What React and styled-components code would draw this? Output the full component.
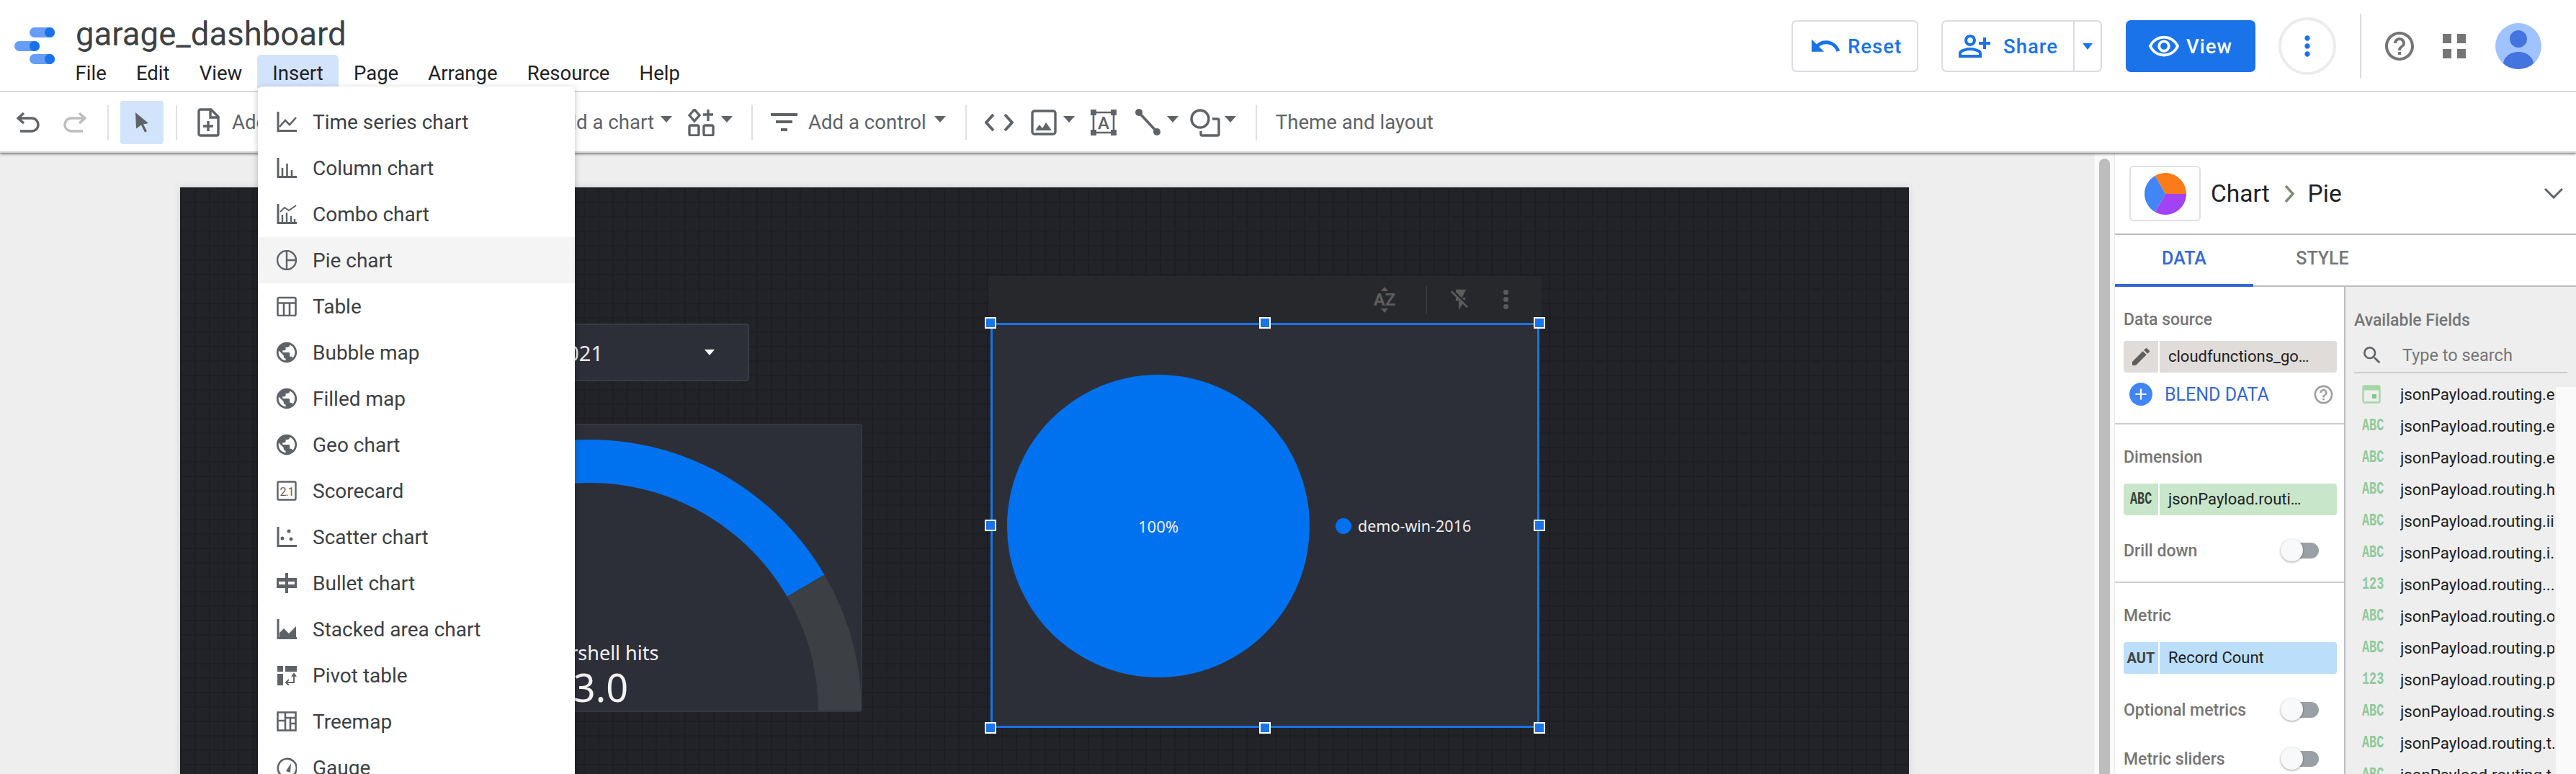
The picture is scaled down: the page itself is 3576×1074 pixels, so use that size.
import React from "react";
import styled, { createGlobalStyle } from "styled-components";
import {
  MdPublic,
  MdUndo,
  MdOutlinePersonAddAlt,
  MdOutlineRemoveRedEye,
  MdMoreVert,
  MdHelpOutline,
  MdEdit,
  MdSearch,
  MdAdd,
  MdFlashOff,
} from "react-icons/md";

const GlobalStyle = createGlobalStyle`
  html, body {
    margin: 0;
    padding: 0;
    overflow: hidden;
    background: #eee;
    font-family: Roboto, "Liberation Sans", sans-serif;
  }
  * { box-sizing: border-box; }
`;

const Page = styled.div`
  position: relative;
  width: 3576px;
  height: 1074px;
  display: flex;
  flex-direction: column;
  overflow: hidden;
`;

/* ---- top header ---- */
const Header = styled.header`
  height: 128px;
  flex: none;
  display: flex;
  align-items: center;
  background: #fff;
  border-bottom: 2px solid #dadce0;
  padding: 2px 48px 0 20px;
`;
const Logo = styled.svg`
  width: 56px;
  height: 52px;
  flex: none;
`;
const TitleBlock = styled.div`
  align-self: flex-start;
  margin-left: 29px;
  padding-top: 22px;
  display: flex;
  flex-direction: column;
`;
const Title = styled.div`
  font-size: 45.5px;
  line-height: 48px;
  color: #3c4043;
`;
const MenuBar = styled.nav`
  display: flex;
  margin-left: -21px;
  margin-top: 4px;
`;
const MenuItem = styled.div`
  height: 46px;
  padding: 0 ${(p) => (p.$active ? 21.6 : 20.6)}px;
  font-size: 27.5px;
  line-height: 52px;
  color: #202124;
  border-radius: 6px 6px 0 0;
  background: ${(p) => (p.$active ? "#d2e3fc" : "transparent")};
`;
const HeaderRight = styled.div`
  margin-left: auto;
  display: flex;
  align-items: center;
`;
const OutlineButton = styled.div`
  height: 72px;
  width: ${(p) => p.$w}px;
  margin-left: ${(p) => p.$ml || 0}px;
  display: flex;
  align-items: center;
  border: 2px solid #dadce0;
  border-radius: 7px;
  color: #1a73e8;
  font-size: 27.5px;
  letter-spacing: 1px;
  font-weight: 500;
  padding-left: ${(p) => p.$pl}px;
`;
const ShareCaret = styled.div`
  margin-left: auto;
  width: 38px;
  height: 100%;
  border-left: 2px solid #dadce0;
  display: flex;
  align-items: center;
  justify-content: center;
  &::before {
    content: "";
    border-left: 7px solid transparent;
    border-right: 7px solid transparent;
    border-top: 9px solid #1a73e8;
  }
`;
const ViewButton = styled.div`
  height: 72px;
  width: 180px;
  margin-left: 33px;
  display: flex;
  align-items: center;
  padding-left: 30px;
  gap: 8px;
  background: #1a73e8;
  color: #fff;
  border-radius: 7px;
  font-size: 27.5px;
  letter-spacing: 1px;
  font-weight: 500;
`;
const MoreButton = styled.div`
  width: 80px;
  height: 80px;
  margin-left: 32px;
  border: 4px solid #ececec;
  border-radius: 50%;
  display: flex;
  align-items: center;
  justify-content: center;
  color: #1a73e8;
`;
const HeaderSep = styled.div`
  width: 2px;
  height: 90px;
  margin-left: 33px;
  background: #dadce0;
`;
const AppsGrid = styled.div`
  display: grid;
  grid-template-columns: 12px 12px;
  grid-auto-rows: 13px;
  gap: 8px;
  margin-left: 36px;
  & > span {
    background: #757575;
  }
`;
const Avatar = styled.svg`
  width: 64px;
  height: 64px;
  margin-left: 41px;
`;

/* ---- toolbar ---- */
const Toolbar = styled.div`
  position: relative;
  z-index: 2;
  height: 84px;
  flex: none;
  display: flex;
  align-items: center;
  background: #fff;
  border-bottom: 2px solid #d6d6d6;
  box-shadow: 0 2px 3px rgba(0, 0, 0, 0.45);
  padding: 1px 0 0 23px;
  color: #5f6368;
`;
const ToolIcon = styled.svg`
  flex: none;
  width: ${(p) => p.$w}px;
  height: ${(p) => p.$h || 36}px;
  margin-left: ${(p) => p.$ml || 0}px;
`;
const ToolSep = styled.div`
  flex: none;
  width: 2px;
  height: 48px;
  background: #e0e0e0;
  margin-left: ${(p) => p.$ml}px;
`;
const ToolCaret = styled.div`
  flex: none;
  margin-left: ${(p) => p.$ml}px;
  margin-top: -8px;
  border-left: 8px solid transparent;
  border-right: 8px solid transparent;
  border-top: 9px solid #5f6368;
`;
const ToolLabel = styled.div`
  flex: none;
  margin-left: ${(p) => p.$ml || 0}px;
  font-size: 27.6px;
  color: #5f6368;
  white-space: nowrap;
`;
const PointerTool = styled.div`
  flex: none;
  width: 60px;
  height: 60px;
  margin-left: 16px;
  background: #d2e3fc;
  border-radius: 4px;
  display: flex;
  align-items: center;
  justify-content: center;
`;
const AddGroup = styled.div`
  flex: none;
  width: 635px;
  margin-left: 27px;
  display: flex;
  align-items: center;
  & > ${ToolLabel}:last-child {
    margin-left: auto;
  }
`;

/* ---- work area ---- */
const Body = styled.div`
  flex: 1;
  min-height: 0;
  display: flex;
`;
const Workspace = styled.div`
  flex: 1;
  min-width: 0;
  padding: 48px 0 0 250px;
  background: #eee;
  overflow: hidden;
`;
const Canvas = styled.div`
  position: relative;
  width: 2400px;
  height: 820px;
  background-color: #212328;
  background-image: linear-gradient(#1c1e22 2px, transparent 2px),
    linear-gradient(90deg, #1c1e22 2px, transparent 2px);
  background-size: 20px 20px;
  background-position: 20px 20px;
  box-shadow: 0 0 10px rgba(0, 0, 0, 0.12);
`;
const FilterWidget = styled.div`
  position: absolute;
  left: 370px;
  top: 189px;
  width: 420px;
  height: 80px;
  display: flex;
  align-items: center;
  justify-content: flex-end;
  gap: 141px;
  padding-right: 46px;
  background: #2d2f38;
  border: 2px solid #3a3c44;
  border-radius: 4px;
  color: #e8e8e8;
  font-family: "Noto Sans", sans-serif;
  font-size: 29px;
  &::after {
    content: "";
    border-left: 7px solid transparent;
    border-right: 7px solid transparent;
    border-top: 8px solid #fff;
  }
`;
const GaugeWidget = styled.div`
  position: absolute;
  left: 190px;
  top: 328px;
  width: 757px;
  height: 400px;
  background: #2d2f38;
  border: 2px solid #34363d;
  border-radius: 4px;
  overflow: hidden;
  display: flex;
  flex-direction: column;
  align-items: center;
  justify-content: flex-end;
  padding-bottom: 3px;
  color: #f2f2f2;
  font-family: "Noto Sans", sans-serif;
`;
const GaugeArc = styled.svg`
  position: absolute;
  left: -2px;
  top: -2px;
  width: 757px;
  height: 400px;
`;
const GaugeLabel = styled.div`
  position: relative;
  font-size: 27px;
  line-height: 34px;
`;
const GaugeValue = styled.div`
  position: relative;
  font-size: 54px;
  line-height: 60px;
`;
const ChartBar = styled.div`
  position: absolute;
  left: 1122px;
  top: 123px;
  width: 768px;
  height: 65px;
  background: #27282c;
  display: flex;
  align-items: center;
  justify-content: flex-end;
  color: #5c5c5c;
`;
const SortAz = styled.div`
  font-size: 24px;
  font-weight: 700;
  line-height: 20px;
  width: 28px;
  text-align: center;
  display: flex;
  flex-direction: column;
  align-items: center;
  gap: 2px;
  &::before,
  &::after {
    content: "";
    border-left: 5px solid transparent;
    border-right: 5px solid transparent;
  }
  &::before {
    border-bottom: 6px solid #5c5c5c;
  }
  &::after {
    border-top: 6px solid #5c5c5c;
  }
`;
const BarSep = styled.div`
  width: 1px;
  height: 38px;
  margin: 0 30px 0 44px;
  background: #424242;
`;
const BarDots = styled.div`
  margin: 0 46px 0 42px;
  display: flex;
  flex-direction: column;
  gap: 3px;
  & > span {
    width: 7px;
    height: 7px;
    border-radius: 50%;
    background: #5c5c5c;
  }
`;
const PieWidget = styled.div`
  position: absolute;
  left: 1125px;
  top: 188px;
  width: 762px;
  height: 562px;
  background: #2d2f38;
  box-shadow: inset 0 0 0 3px #1a73e8;
  display: flex;
  align-items: center;
  padding: 1px 0 0 23px;
  font-family: "Noto Sans", sans-serif;
  color: #eee;
`;
const PieCircle = styled.div`
  width: 420px;
  height: 420px;
  flex: none;
  border-radius: 50%;
  background: #0072f0;
  display: flex;
  align-items: center;
  justify-content: center;
  font-size: 22px;
`;
const Legend = styled.div`
  margin-left: 36px;
  display: flex;
  align-items: center;
  gap: 9px;
  font-size: 21.5px;
  &::before {
    content: "";
    width: 22px;
    height: 22px;
    border-radius: 50%;
    background: #0072f0;
  }
`;
const Handle = styled.div`
  position: absolute;
  left: ${(p) => p.$x}%;
  top: ${(p) => p.$y}%;
  width: 16px;
  height: 16px;
  transform: translate(-50%, -50%);
  background: #1a73e8;
  border: 2px solid #fff;
`;

/* ---- insert dropdown ---- */
const Dropdown = styled.div`
  position: absolute;
  z-index: 3;
  left: 358px;
  top: 120px;
  width: 440px;
  bottom: -10px;
  padding-top: 17px;
  background: #fff;
  border-radius: 6px 6px 0 0;
  box-shadow: 0 2px 8px rgba(0, 0, 0, 0.25);
`;
const DropRow = styled.div`
  height: 64px;
  display: flex;
  align-items: center;
  gap: 22px;
  padding-left: 26px;
  font-size: 28px;
  color: #3c4043;
  background: ${(p) => (p.$hover ? "#f4f4f4" : "transparent")};
`;
const RowIcon = styled.svg`
  width: 28px;
  height: 28px;
  flex: none;
`;

/* ---- right panel ---- */
const ScrollTrack = styled.div`
  flex: none;
  width: 28px;
  padding: 8px 6px 0;
  background: #fafafa;
  border-right: 1px solid #e8e8e8;
  &::before {
    content: "";
    display: block;
    height: 100%;
    background: #bdbdbd;
    border-radius: 8px 8px 0 0;
  }
`;
const Panel = styled.aside`
  flex: none;
  width: 640px;
  display: flex;
  flex-direction: column;
  background: #fff;
`;
const PanelHead = styled.div`
  height: 114px;
  flex: none;
  display: flex;
  align-items: flex-start;
  padding: 18px 17px 0 20px;
  border-bottom: 2px solid #bdbdbd;
`;
const ChartThumb = styled.div`
  width: 99px;
  height: 77px;
  border: 2px solid #e0e0e0;
  border-radius: 6px;
  display: flex;
  align-items: center;
  justify-content: center;
`;
const Crumbs = styled.div`
  height: 77px;
  margin-left: 14px;
  display: flex;
  align-items: center;
  font-size: 33.5px;
  color: #202124;
`;
const CrumbChevron = styled.svg`
  width: 15px;
  height: 26px;
  margin: 0 18px 0 20px;
`;
const PanelChevron = styled.svg`
  width: 28px;
  height: 16px;
  margin: 30px 0 0 auto;
`;
const Tabs = styled.div`
  height: 72px;
  flex: none;
  display: flex;
  border-bottom: 2px solid #bdbdbd;
`;
const Tab = styled.div`
  width: 192px;
  height: 72px;
  display: flex;
  align-items: center;
  justify-content: center;
  padding-bottom: 4px;
  font-size: 25px;
  font-weight: 500;
  color: ${(p) => (p.$active ? "#3367d6" : "#757575")};
  border-bottom: 4px solid ${(p) => (p.$active ? "#3367d6" : "transparent")};
`;
const PanelColumns = styled.div`
  flex: 1;
  min-height: 0;
  display: flex;
  position: relative;
`;
const SetupCol = styled.div`
  width: 320px;
  flex: none;
  border-right: 2px solid #bdbdbd;
`;
const Section = styled.section`
  padding: 29px 0 ${(p) => p.$pb || 0}px 12px;
  border-bottom: ${(p) => (p.$line ? "2px solid #ccc" : "none")};
`;
const SectionLabel = styled.div`
  height: 30px;
  line-height: 33px;
  font-size: 23px;
  font-weight: 500;
  color: #757575;
  white-space: nowrap;
`;
const Pill = styled.div`
  width: 296px;
  height: 44px;
  margin-top: ${(p) => p.$mt || 23}px;
  display: flex;
  background: ${(p) => p.$bg};
  border-radius: 4px;
  font-size: 22px;
  color: #202124;
`;
const PillType = styled.div`
  width: 50px;
  flex: none;
  border-right: 2px solid #fff;
  display: flex;
  align-items: center;
  justify-content: center;
  color: #424242;
`;
const TypeMono = styled.span`
  display: inline-block;
  width: 30px;
  font-family: "Liberation Mono", monospace;
  font-size: 24px;
  line-height: 24px;
  font-weight: 700;
  white-space: nowrap;
  transform: scaleX(0.7);
  transform-origin: left center;
  color: ${(p) => p.$color};
`;
const AutoTag = styled.span`
  font-size: 20px;
  font-weight: 700;
  color: #424242;
`;
const PillText = styled.div`
  padding-left: 12px;
  line-height: 44px;
  white-space: nowrap;
`;
const BlendRow = styled.div`
  display: flex;
  align-items: center;
  height: 32px;
  margin: 14px 0 0 8px;
  padding-right: 13px;
  color: #3367d6;
  font-size: 25px;
`;
const BlendPlus = styled.div`
  width: 32px;
  height: 32px;
  margin-right: 17px;
  border-radius: 50%;
  background: #4285f4;
  display: flex;
  align-items: center;
  justify-content: center;
  color: #fff;
`;
const BlendHelp = styled.div`
  margin-left: auto;
  display: flex;
  color: #9e9e9e;
`;
const ToggleRow = styled.div`
  display: flex;
  align-items: center;
  justify-content: space-between;
  height: 32px;
  margin-top: ${(p) => p.$mt}px;
  padding-right: 35px;
  font-size: 23px;
  font-weight: 500;
  color: #757575;
`;
const Toggle = styled.div`
  position: relative;
  width: 53px;
  height: 32px;
  &::before {
    content: "";
    position: absolute;
    left: 10px;
    right: 0;
    top: 5px;
    height: 22px;
    border-radius: 11px;
    background: #9aa0a6;
  }
  &::after {
    content: "";
    position: absolute;
    left: 0;
    top: 0;
    width: 31px;
    height: 31px;
    border-radius: 50%;
    background: #f8f9fa;
    box-shadow: 0 1px 3px rgba(0, 0, 0, 0.4);
  }
`;
const FieldsCol = styled.div`
  flex: 1;
  min-width: 0;
  padding-top: 30px;
  background: #eee;
  overflow: hidden;
`;
const FieldsLabel = styled(SectionLabel)`
  padding-left: 12px;
`;
const SearchRow = styled.div`
  height: 46px;
  margin: 14px 12px 0 12px;
  display: flex;
  align-items: center;
  border-bottom: 2px solid #ccc;
  padding: 0 0 3px 9px;
  color: #5f6368;
  font-size: 23.5px;
`;
const SearchHint = styled.span`
  margin-left: 26px;
  color: #757575;
`;
const FieldList = styled.div`
  margin-top: 7px;
`;
const FieldRow = styled.div`
  height: 44px;
  display: flex;
  align-items: center;
  padding-left: 23px;
  font-size: 22.3px;
  color: #212121;
  white-space: nowrap;
`;
const FieldType = styled.div`
  width: 53px;
  flex: none;
  display: flex;
  align-items: center;
`;
const FieldName = styled.div`
  width: 214px;
  overflow: hidden;
`;
const FieldScroll = styled.div`
  position: absolute;
  right: 0;
  top: 139px;
  bottom: 0;
  width: 28px;
  background: #fafafa;
`;

const chartAxes = "M2 0V26.5H28";

const menuRows = [
  {
    label: "Time series chart",
    icon: (
      <>
        <path d={chartAxes} fill="none" stroke="#5f6368" strokeWidth="3" />
        <path d="M4 21l8-9 6 6 9-10" fill="none" stroke="#5f6368" strokeWidth="2.6" />
      </>
    ),
  },
  {
    label: "Column chart",
    icon: (
      <>
        <path d={chartAxes} fill="none" stroke="#5f6368" strokeWidth="3" />
        <path d="M8 25V14M14.500 25V8M21 25V17" stroke="#5f6368" strokeWidth="2.6" />
      </>
    ),
  },
  {
    label: "Combo chart",
    icon: (
      <>
        <path d={chartAxes} fill="none" stroke="#5f6368" strokeWidth="3" />
        <path d="M8 25V15M14 25V12M20 25V17M25 25v-4" stroke="#5f6368" strokeWidth="2.4" />
        <path d="M5 11l6-6 6 4 10-7" fill="none" stroke="#5f6368" strokeWidth="2" />
      </>
    ),
  },
  {
    label: "Pie chart",
    icon: (
      <>
        <circle cx="14" cy="14" r="13" fill="none" stroke="#5f6368" strokeWidth="2.4" />
        <path d="M14 1v26M14 14h13" stroke="#5f6368" strokeWidth="2.4" />
      </>
    ),
  },
  {
    label: "Table",
    icon: (
      <>
        <rect x="1.500" y="2" width="25" height="25" rx="2" fill="none" stroke="#5f6368" strokeWidth="2.6" />
        <path d="M1.500 9.500h25M10 9.500V27M18 9.500V27" stroke="#5f6368" strokeWidth="2.6" />
      </>
    ),
  },
  { label: "Bubble map", globe: true },
  { label: "Filled map", globe: true },
  { label: "Geo chart", globe: true },
  {
    label: "Scorecard",
    icon: (
      <>
        <rect x="1.500" y="1.500" width="25" height="25" rx="1.500" fill="none" stroke="#5f6368" strokeWidth="2.4" />
        <text x="14" y="20.500" textAnchor="middle" fontSize="16" fill="#5f6368" fontFamily="Roboto, sans-serif" letterSpacing="-1">
          2.1
        </text>
      </>
    ),
  },
  {
    label: "Scatter chart",
    icon: (
      <>
        <path d={chartAxes} fill="none" stroke="#5f6368" strokeWidth="3" />
        <circle cx="8" cy="16" r="2.500" fill="#5f6368" />
        <circle cx="17" cy="6" r="2.500" fill="#5f6368" />
        <circle cx="20" cy="17" r="2.500" fill="#5f6368" />
      </>
    ),
  },
  {
    label: "Bullet chart",
    icon: (
      <path
        fillRule="evenodd"
        fill="#5f6368"
        d="M12 0h4v7h12v14H16v7h-4v-7H0V7h12zM3 12v4h9v-4zm13 0v4h9v-4z"
      />
    ),
  },
  {
    label: "Stacked area chart",
    icon: (
      <>
        <path d={chartAxes} fill="none" stroke="#5f6368" strokeWidth="3" />
        <path d="M4 26v-7l6-6 7 7 10-10v16z" fill="#5f6368" />
      </>
    ),
  },
  {
    label: "Pivot table",
    icon: (
      <>
        <path d="M1 1h8v8H1zM12 1h16v8H12zM1 12h8v16H1z" fill="#5f6368" />
        <path d="M24 13v11H14M17 20l-4 4 4 4M21 16l3-4 3 4" fill="none" stroke="#5f6368" strokeWidth="2" />
      </>
    ),
  },
  {
    label: "Treemap",
    icon: (
      <>
        <rect x="1.500" y="1.500" width="25" height="25" fill="none" stroke="#5f6368" strokeWidth="2.6" />
        <path d="M12 1.500v25M1.500 13H12M12 9h14.500M19 9v17.500M19 17h7.500" fill="none" stroke="#5f6368" strokeWidth="2.6" />
      </>
    ),
  },
  {
    label: "Gauge",
    icon: (
      <>
        <path d="M8 26A13 13 0 1 1 24 24" fill="none" stroke="#5f6368" strokeWidth="2.6" />
        <path d="M13 19l7-11-1 13z" fill="#5f6368" />
      </>
    ),
  },
];

const fieldRows = [
  ["date", "jsonPayload.routing.e."],
  ["abc", "jsonPayload.routing.e."],
  ["abc", "jsonPayload.routing.e."],
  ["abc", "jsonPayload.routing.h"],
  ["abc", "jsonPayload.routing.iid"],
  ["abc", "jsonPayload.routing.i.."],
  ["num", "jsonPayload.routing...."],
  ["abc", "jsonPayload.routing.o"],
  ["abc", "jsonPayload.routing.p"],
  ["num", "jsonPayload.routing.p"],
  ["abc", "jsonPayload.routing.si"],
  ["abc", "jsonPayload.routing.t.."],
  ["abc", "jsonPayload.routing.t"],
];

const FieldTypeIcon = ({ kind }) => {
  if (kind === "date") {
    return (
      <svg width="26" height="26" viewBox="0 0 26 26">
        <rect x="1.500" y="1.500" width="23" height="23" rx="2" fill="none" stroke="#a5d6a7" strokeWidth="2.400" />
        <rect x="1.500" y="1.500" width="23" height="6" fill="#a5d6a7" />
        <rect x="14" y="13" width="6" height="6" fill="#81c784" />
      </svg>
    );
  }
  return <TypeMono $color="#8fc99a">{kind === "abc" ? "ABC" : "123"}</TypeMono>;
};

export default function App() {
  return (
    <Page>
      <GlobalStyle />
      <Header>
        <Logo viewBox="0 0 56 52">
          <rect x="21" y="0" width="35" height="14" rx="7" fill="#669df6" />
          <circle cx="49" cy="7" r="7" fill="#1a73e8" />
          <rect x="0" y="19" width="35" height="14" rx="7" fill="#669df6" />
          <circle cx="28" cy="26" r="7" fill="#1a73e8" />
          <rect x="21" y="37" width="35" height="14" rx="7" fill="#669df6" />
          <circle cx="49" cy="44" r="7" fill="#1a73e8" />
        </Logo>
        <TitleBlock>
          <Title>garage_dashboard</Title>
          <MenuBar>
            <MenuItem>File</MenuItem>
            <MenuItem>Edit</MenuItem>
            <MenuItem>View</MenuItem>
            <MenuItem $active>Insert</MenuItem>
            <MenuItem>Page</MenuItem>
            <MenuItem>Arrange</MenuItem>
            <MenuItem>Resource</MenuItem>
            <MenuItem>Help</MenuItem>
          </MenuBar>
        </TitleBlock>
        <HeaderRight>
          <OutlineButton $w={176} $pl={22}>
            <MdUndo size={46} style={{ marginRight: 8 }} />
            Reset
          </OutlineButton>
          <OutlineButton $w={223} $ml={32} $pl={20}>
            <MdOutlinePersonAddAlt size={48} style={{ marginRight: 16 }} />
            Share
            <ShareCaret />
          </OutlineButton>
          <ViewButton>
            <MdOutlineRemoveRedEye size={46} />
            View
          </ViewButton>
          <MoreButton>
            <MdMoreVert size={44} />
          </MoreButton>
          <HeaderSep />
          <MdHelpOutline size={48} color="#757575" style={{ marginLeft: 29 }} />
          <AppsGrid>
            <span />
            <span />
            <span />
            <span />
          </AppsGrid>
          <Avatar viewBox="0 0 64 64">
            <defs>
              <clipPath id="avatarClip">
                <circle cx="32" cy="32" r="32" />
              </clipPath>
            </defs>
            <circle cx="32" cy="32" r="32" fill="#a0c3ff" />
            <g clipPath="url(#avatarClip)" fill="#4374e0">
              <circle cx="32" cy="22" r="12" />
              <ellipse cx="32" cy="57" rx="21" ry="17" />
            </g>
          </Avatar>
        </HeaderRight>
      </Header>

      <Toolbar>
        <ToolIcon $w={32} $h={30} viewBox="0 0 32 30">
          <path d="M10 2L2 9l8 7M3 9h18a9 9 0 0 1 0 18H5" fill="none" stroke="#5f6368" strokeWidth="3.400" />
        </ToolIcon>
        <ToolIcon $w={32} $h={30} $ml={33} viewBox="0 0 32 30">
          <path d="M22 2l8 7-8 7M29 9H11a9 9 0 0 0 0 18h16" fill="none" stroke="#bdbdbd" strokeWidth="3.400" />
        </ToolIcon>
        <ToolSep $ml={29} />
        <PointerTool>
          <svg width="20" height="28" viewBox="0 0 20 28">
            <path d="M1 0l18 15-7 1.500 5 9.500-3 1.500-5-10-7 5z" fill="#5f6368" />
          </svg>
        </PointerTool>
        <ToolSep $ml={17} />
        <AddGroup>
          <ToolIcon $w={32} $h={40} viewBox="0 0 32 40">
            <path d="M5 2h15l10 10v24a2 2 0 0 1-2 2H5a2 2 0 0 1-2-2V4a2 2 0 0 1 2-2zM19 3v10h10M16 18v14M9 25h14" fill="none" stroke="#5f6368" strokeWidth="3.400" />
          </ToolIcon>
          <ToolLabel $ml={17}>Add page</ToolLabel>
          <ToolLabel>Add a chart</ToolLabel>
        </AddGroup>
        <ToolCaret $ml={9} />
        <ToolIcon $w={38} $h={38} $ml={22} viewBox="0 0 38 38">
          <path d="M9 1l7 8-7 8-7-8zM28 1v16M21 8h14" fill="none" stroke="#5f6368" strokeWidth="3.400" />
          <rect x="2" y="23" width="13" height="14" rx="2" fill="none" stroke="#5f6368" strokeWidth="3.400" />
          <rect x="22" y="23" width="13" height="14" rx="2" fill="none" stroke="#5f6368" strokeWidth="3.400" />
        </ToolIcon>
        <ToolCaret $ml={8} />
        <ToolSep $ml={26} />
        <ToolIcon $w={37} $h={26} $ml={25} viewBox="0 0 37 26">
          <path d="M0 2h37M7 12h23M14 23h9" fill="none" stroke="#5f6368" strokeWidth="4" />
        </ToolIcon>
        <ToolLabel $ml={15}>Add a control</ToolLabel>
        <ToolCaret $ml={11} />
        <ToolSep $ml={27} />
        <ToolIcon $w={40} $h={26} $ml={25} viewBox="0 0 40 26">
          <path d="M12 2L2 13l10 11M28 2l10 11-10 11" fill="none" stroke="#5f6368" strokeWidth="4" />
        </ToolIcon>
        <ToolIcon $w={36} $h={36} $ml={24} viewBox="0 0 36 36">
          <rect x="2" y="2" width="32" height="32" rx="3" fill="none" stroke="#5f6368" strokeWidth="3.400" />
          <path d="M6 29l6-8 4 5 5-8 8 11z" fill="#5f6368" />
        </ToolIcon>
        <ToolCaret $ml={9} />
        <ToolIcon $w={36} $h={36} $ml={22} viewBox="0 0 36 36">
          <path d="M0 0h8v8H0zM28 0h8v8h-8zM0 28h8v8H0zM28 28h8v8h-8z" fill="#5f6368" />
          <path d="M4 4h28v28H4z" fill="none" stroke="#5f6368" strokeWidth="2.600" />
          <text x="18" y="27" textAnchor="middle" fontSize="24" fontWeight="500" fill="#5f6368" fontFamily="Roboto, sans-serif">
            A
          </text>
        </ToolIcon>
        <ToolIcon $w={37} $h={38} $ml={25} viewBox="0 0 37 38">
          <path d="M6 5l25 27" stroke="#5f6368" strokeWidth="3.600" />
          <circle cx="6" cy="5" r="5" fill="#5f6368" />
          <circle cx="31" cy="32" r="5" fill="#5f6368" />
        </ToolIcon>
        <ToolCaret $ml={8} />
        <ToolIcon $w={42} $h={40} $ml={16} viewBox="0 0 42 40">
          <circle cx="14" cy="15" r="12" fill="none" stroke="#5f6368" strokeWidth="3.400" />
          <path d="M31 15h7a2 2 0 0 1 2 2v19a2 2 0 0 1-2 2H17a2 2 0 0 1-2-2v-4" fill="none" stroke="#5f6368" strokeWidth="3.400" />
        </ToolIcon>
        <ToolCaret $ml={6} />
        <ToolSep $ml={27} />
        <ToolLabel $ml={26}>Theme and layout</ToolLabel>
      </Toolbar>

      <Body>
        <Workspace>
          <Canvas>
            <FilterWidget>
              <span>Jan 1, 2021</span>
            </FilterWidget>
            <GaugeWidget>
              <GaugeArc viewBox="0 0 757 400">
                <path d="M0 400A378 378 0 0 1 704.500 209.500L652.700 239.700A318 318 0 0 0 60 400Z" fill="#0072f0" />
                <path d="M704.500 209.500A378 378 0 0 1 756 400H696A318 318 0 0 0 652.700 239.700Z" fill="#3c3f43" />
              </GaugeArc>
              <GaugeLabel>Powershell hits</GaugeLabel>
              <GaugeValue>13.0</GaugeValue>
            </GaugeWidget>
            <ChartBar>
              <SortAz>AZ</SortAz>
              <BarSep />
              <MdFlashOff size={34} />
              <BarDots>
                <span />
                <span />
                <span />
              </BarDots>
            </ChartBar>
            <PieWidget>
              <PieCircle>100%</PieCircle>
              <Legend>demo-win-2016</Legend>
              <Handle $x={0} $y={0} />
              <Handle $x={50} $y={0} />
              <Handle $x={100} $y={0} />
              <Handle $x={0} $y={50} />
              <Handle $x={100} $y={50} />
              <Handle $x={0} $y={100} />
              <Handle $x={50} $y={100} />
              <Handle $x={100} $y={100} />
            </PieWidget>
          </Canvas>
        </Workspace>
        <ScrollTrack />
        <Panel>
          <PanelHead>
            <ChartThumb>
              <svg width="58" height="58" viewBox="-29 -29 58 58">
                <path d="M0 0L-14.500 -25.100A29 29 0 0 1 29 0Z" fill="#fa7b17" />
                <path d="M0 0L29 0A29 29 0 0 1 -14.500 25.100Z" fill="#a142f4" />
                <path d="M0 0L-14.500 25.100A29 29 0 0 1 -14.500 -25.100Z" fill="#4285f4" />
              </svg>
            </ChartThumb>
            <Crumbs>
              Chart
              <CrumbChevron viewBox="0 0 15 26">
                <path d="M2 2l10 11L2 24" fill="none" stroke="#7f8a6f" strokeWidth="3.400" />
              </CrumbChevron>
              Pie
            </Crumbs>
            <PanelChevron viewBox="0 0 28 16">
              <path d="M2 2l12 12L26 2" fill="none" stroke="#5f6368" strokeWidth="3" />
            </PanelChevron>
          </PanelHead>
          <Tabs>
            <Tab $active>DATA</Tab>
            <Tab>STYLE</Tab>
          </Tabs>
          <PanelColumns>
            <SetupCol>
              <Section $line $pb={24}>
                <SectionLabel>Data source</SectionLabel>
                <Pill $bg="#e0dcd9" $mt={16}>
                  <PillType>
                    <MdEdit size={32} color="#5f5f5f" />
                  </PillType>
                  <PillText>cloudfunctions_go…</PillText>
                </Pill>
                <BlendRow>
                  <BlendPlus>
                    <MdAdd size={26} />
                  </BlendPlus>
                  BLEND DATA
                  <BlendHelp>
                    <MdHelpOutline size={31} />
                  </BlendHelp>
                </BlendRow>
              </Section>
              <Section $line $pb={27}>
                <SectionLabel>Dimension</SectionLabel>
                <Pill $bg="#c8e6c9">
                  <PillType>
                    <TypeMono $color="#33423a">ABC</TypeMono>
                  </PillType>
                  <PillText>jsonPayload.routi…</PillText>
                </Pill>
                <ToggleRow $mt={33}>
                  Drill down
                  <Toggle />
                </ToggleRow>
              </Section>
              <Section>
                <SectionLabel>Metric</SectionLabel>
                <Pill $bg="#bbdefb">
                  <PillType>
                    <AutoTag>AUT</AutoTag>
                  </PillType>
                  <PillText>Record Count</PillText>
                </Pill>
                <ToggleRow $mt={34}>
                  Optional metrics
                  <Toggle />
                </ToggleRow>
                <ToggleRow $mt={36}>
                  Metric sliders
                  <Toggle />
                </ToggleRow>
              </Section>
            </SetupCol>
            <FieldsCol>
              <FieldsLabel>Available Fields</FieldsLabel>
              <SearchRow>
                <MdSearch size={32} />
                <SearchHint>Type to search</SearchHint>
              </SearchRow>
              <FieldList>
                {fieldRows.map(([kind, name], i) => (
                  <FieldRow key={i}>
                    <FieldType>
                      <FieldTypeIcon kind={kind} />
                    </FieldType>
                    <FieldName>{name}</FieldName>
                  </FieldRow>
                ))}
              </FieldList>
            </FieldsCol>
            <FieldScroll />
          </PanelColumns>
        </Panel>
      </Body>

      <Dropdown>
        {menuRows.map((row) => (
          <DropRow key={row.label} $hover={row.label === "Pie chart"}>
            {row.globe ? (
              <MdPublic size={34} color="#5f6368" style={{ margin: "0 -3px" }} />
            ) : (
              <RowIcon viewBox="0 0 28 28">{row.icon}</RowIcon>
            )}
            {row.label}
          </DropRow>
        ))}
      </Dropdown>
    </Page>
  );
}
